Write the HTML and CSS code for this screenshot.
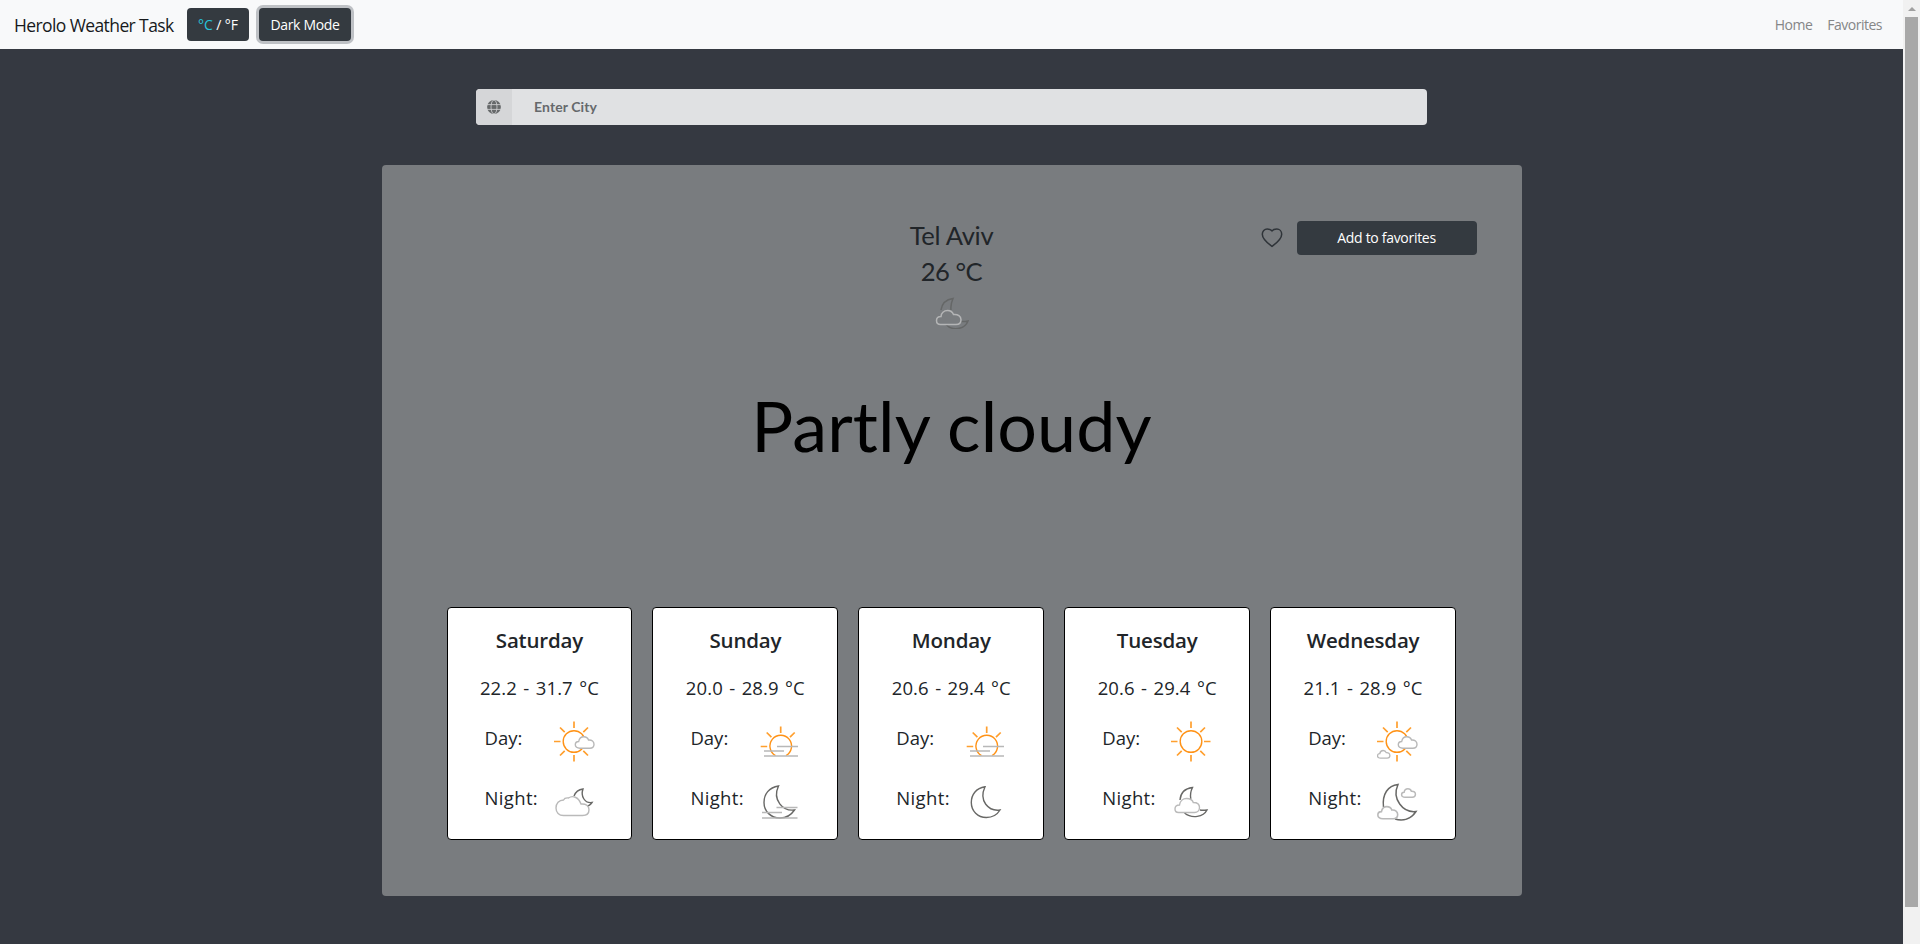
FILE: index.html
```html
<!DOCTYPE html>
<html lang="en">
<head>
<meta charset="utf-8">
<title>Herolo Weather Task</title>
<link rel="stylesheet" href="styles.css">
</head>
<body>
<svg class="defs" width="0" height="0">
  <defs>
    <g id="rays" stroke="#ff9f2e" stroke-width="1.7" fill="none">
      <path d="M20 .5v6.500M0 20.500h6.500M6 6.500l4.700 4.700M34 6.500l-4.700 4.700"/>
    </g>
    <path id="cloud" d="M5.500 12.200C2.500 12.200.8 10.800.8 8.700c0-2 1.400-3.200 3.400-3.200C4.700 2.700 6.700.8 9.300.8c2.300 0 4 1.200 4.700 3.200 3.400-.3 5.500 1.600 5.500 4.200 0 2.400-1.700 4-4.200 4z"/>
    <path id="moon" d="M14.500.8C5.500 2 .8 9 .8 16.500c0 8.500 6.500 15 15 15 6 0 11-3 13.700-7.500C18 25.500 8 15 14.500.8z"/>
  </defs>
</svg>
<div class="window">
  <div class="page">
    <nav class="navbar">
      <span class="brand">Herolo Weather Task</span>
      <button class="btn btn-unit"><span class="unit-on">°C</span> / °F</button>
      <button class="btn btn-mode focused">Dark Mode</button>
      <div class="links"><a>Home</a><a>Favorites</a></div>
    </nav>
    <div class="search">
      <span class="addon">
        <svg width="14" height="14" viewBox="0 0 14 14"><circle cx="7" cy="7" r="6.900" fill="#66696a"/><g fill="none" stroke="#d5d6d8" stroke-width=".8"><ellipse cx="7" cy="7" rx="3" ry="7"/><path d="M0 4.600h14M0 9.400h14"/></g></svg>
      </span>
      <span class="field">Enter City</span>
    </div>
    <main class="panel">
      <div class="top">
        <div></div>
        <div class="current">
          <div class="city">Tel Aviv</div>
          <div class="temp">26 °C</div>
          <svg class="now" width="34" height="32" viewBox="0 0 34 32" fill="none" stroke-width="1.500"><path d="M6 13C7 6 11 2.500 18 1.500 16 6 15.500 9 16 13M25.500 24.300C28 24.800 30.500 24.500 33 24 29.500 33 17 34 11 27.500" stroke="#656767"/><path d="M5.500 27.500C3 27.500 1.500 26 1.500 23.500c0-2.500 1.800-4 4.500-4 0-3.500 3-6 6.500-6 3 0 5 1.500 6 4 4.500-.5 7.500 1.800 7.500 5.200 0 2.800-2 4.800-5 4.800z" stroke="#b4b5b6"/></svg>
        </div>
        <div class="favorite">
          <svg width="22" height="20" viewBox="0 0 22 20" fill="none" stroke="#2f3439" stroke-width="1.500"><path d="M11 18.400C7.500 15.700 1.300 11.500 1.300 6.200 1.300 3.200 3.500 1 6.200 1 8.300 1 10 1.500 11 2.900 12 1.500 13.700 1 15.800 1c2.700 0 4.900 2.200 4.900 5.200 0 5.300-6.200 9.500-9.700 12.200z"/></svg>
          <button class="btn btn-fav">Add to favorites</button>
        </div>
      </div>
      <h1 class="headline">Partly cloudy</h1>
      <div class="days">
        <section class="card">
          <h2 class="day-name">Saturday</h2>
          <p class="range">22.2 - 31.7 °C</p>
          <div class="row"><span class="label">Day:</span>
            <svg width="42" height="42" viewBox="0 0 42 42"><use href="#rays"/><path d="M20 34v6.500M6 34.500l4.700-4.700M34 34.500l-4.700-4.700" stroke="#ff9f2e" stroke-width="1.700"/><circle cx="20" cy="20.500" r="10.800" fill="none" stroke="#ff9216" stroke-width="1.400"/><use href="#cloud" x="20.500" y="15" fill="#fff" stroke="#b8b8b8" stroke-width="1.400"/></svg></div>
          <div class="row night"><span class="label">Night:</span>
            <svg width="42" height="42" viewBox="0 0 42 42" fill="none" stroke-width="1.400"><path d="M20 14C21.500 10 24.500 7.500 29 7 26.500 14 30.500 21.500 38 20.500 36 23.500 33 25 29 24" stroke="#686866"/><path d="M9.500 33.500C5 33.500 2 30.500 2 26s3-8 7.500-8c1-2 3-2.300 5-2 4-3 10-1 12.500 6 5-.5 8 2 8 5.700 0 3.500-2.500 5.800-6.500 5.800z" stroke="#bababa" fill="#fff"/></svg></div>
        </section>
        <section class="card">
          <h2 class="day-name">Sunday</h2>
          <p class="range">20.0 - 28.9 °C</p>
          <div class="row"><span class="label">Day:</span>
            <svg width="42" height="42" viewBox="0 0 42 42" fill="none"><use href="#rays" x="1.700" y="5"/><path d="M16.500 34.500A10.800 10.800 0 1 1 27 34.500" stroke="#ff9216" stroke-width="1.400"/><path d="M18 25.500h21M5 30h20M5 35h34" stroke="#b8b8b8" stroke-width="1.500"/></svg></div>
          <div class="row night"><span class="label">Night:</span>
            <svg width="42" height="42" viewBox="0 0 42 42" fill="none" stroke-width="1.400"><path d="M19.500 4C10 5.500 5 12 5 20.500c0 9 7 15.500 16 15.500 6.500 0 11.500-3.500 14.500-8C24 29.500 13 18 19.500 4z" stroke="#686866"/><path d="M17.500 25.500h21M3 30.500h20M3 36h35.500" stroke="#b8b8b8"/></svg></div>
        </section>
        <section class="card">
          <h2 class="day-name">Monday</h2>
          <p class="range">20.6 - 29.4 °C</p>
          <div class="row"><span class="label">Day:</span>
            <svg width="42" height="42" viewBox="0 0 42 42" fill="none"><use href="#rays" x="1.700" y="5"/><path d="M16.500 34.500A10.800 10.800 0 1 1 27 34.500" stroke="#ff9216" stroke-width="1.400"/><path d="M18 25.500h21M5 30h20M5 35h34" stroke="#b8b8b8" stroke-width="1.500"/></svg></div>
          <div class="row night"><span class="label">Night:</span>
            <svg width="42" height="42" viewBox="0 0 42 42" fill="none"><use href="#moon" x="5.500" y="4" stroke="#686866" stroke-width="1.400"/></svg></div>
        </section>
        <section class="card">
          <h2 class="day-name">Tuesday</h2>
          <p class="range">20.6 - 29.4 °C</p>
          <div class="row"><span class="label">Day:</span>
            <svg width="42" height="42" viewBox="0 0 42 42" fill="none"><use href="#rays"/><path d="M20 34v6.500M33 20.500h6.500M6 34.500l4.700-4.700M34 34.500l-4.700-4.700" stroke="#ff9f2e" stroke-width="1.700"/><circle cx="20" cy="20.500" r="10.800" stroke="#ff9216" stroke-width="1.400"/></svg></div>
          <div class="row night"><span class="label">Night:</span>
            <svg width="42" height="42" viewBox="0 0 42 42" fill="none" stroke-width="1.400"><path d="M9 18C9.500 11 14 6.500 21.500 5.500 19.500 9.500 19 13 19.800 17M29 28C31.500 28.500 33.500 28.300 36 28 32.500 35 21 37 13.500 31" stroke="#686866"/><path d="M7.500 30.500C5.500 30.500 4 29 4 27c0-2.500 1.800-4 4.500-4 .5-4 3.500-6.500 7-6.500 3.300 0 6 1.500 6.800 4 4 0 6.200 2 6.200 5 0 2.800-2 5-5 5z" stroke="#bababa"/></svg></div>
        </section>
        <section class="card">
          <h2 class="day-name">Wednesday</h2>
          <p class="range">21.1 - 28.9 °C</p>
          <div class="row"><span class="label">Day:</span>
            <svg width="42" height="42" viewBox="0 0 42 42"><use href="#rays"/><path d="M20 34v6.500M34 34.500l-4.700-4.700" stroke="#ff9f2e" stroke-width="1.700"/><circle cx="20" cy="20.500" r="10.800" fill="none" stroke="#ff9216" stroke-width="1.400"/><g fill="#fff" stroke="#b8b8b8"><use href="#cloud" x="20.500" y="15" stroke-width="1.400"/><use href="#cloud" transform="translate(0 29) scale(.66)" stroke-width="2"/></g></svg></div>
          <div class="row night"><span class="label">Night:</span>
            <svg width="42" height="42" viewBox="0 0 42 42" fill="none" stroke-width="1.500"><path d="M6.500 25C5 12 11 3.500 21 2.500 14.500 17 26 31 39 29.500 34 37 26 39.500 18 37" stroke="#686866"/><g stroke="#bababa" fill="#fff"><use href="#cloud" transform="translate(0 23.800) scale(1.060)"/><use href="#cloud" transform="translate(24 6.200) scale(.74)" stroke-width="2"/></g></svg></div>
        </section>
      </div>
    </main>
  </div>
  <div class="scrollbar"><span class="arrow"></span><span class="thumb"></span></div>
</div>
</body>
</html>
```
FILE: styles.css
```css
* { box-sizing: border-box; }
body { margin: 0; background: #343a40; font-family: "Open Sans", "Noto Sans", sans-serif; color: #212529; overflow: hidden; }
.defs { display: block; }
.window { display: flex; height: 944px; }
.page { flex: 1; background: #353941; }
.navbar { display: flex; align-items: center; height: 49px; padding: 0 21px 0 14px; background: #f8f9fa; }
.brand { width: 173px; padding-top: 1px; font-size: 17.500px; letter-spacing: -.6px; white-space: nowrap; color: #17191c; }
.btn { height: 33px; padding: 0; border: 0; border-radius: 4px; background: #343a40; color: #fff; font: 500 14px "Open Sans", sans-serif; white-space: nowrap; }
.btn-unit { width: 62px; margin-right: 10px; letter-spacing: -.1px; }
.unit-on { color: #27c4dc; }
.btn-mode { width: 92px; letter-spacing: -.35px; }
.focused { box-shadow: 0 0 0 3px #bec1c5; }
.links { display: flex; gap: 15px; margin-left: auto; font-size: 14px; letter-spacing: -.5px; color: #858687; }
.search { display: flex; width: 951px; height: 36px; margin: 40px auto; border-radius: 4px; overflow: hidden; background: #e0e1e3; }
.addon { display: flex; align-items: center; justify-content: center; width: 36px; background: #d5d6d8; }
.field { padding-left: 22px; font: 700 14px/36px Lato, sans-serif; letter-spacing: .1px; color: #66696c; }
.panel { width: 1140px; height: 731px; margin: 0 auto; padding: 52px 45px 0 65px; border-radius: 4px; background: #797c7f; }
.top { display: grid; grid-template-columns: 415px 180px 1fr; height: 163px; }
.current { display: flex; flex-direction: column; align-items: center; width: 180px; font: 25.600px/36px Lato, sans-serif; }
.city { letter-spacing: -.3px; }
.temp { letter-spacing: -.5px; }
.now { margin-top: 8px; }
.favorite { display: flex; justify-content: flex-end; gap: 14px; height: 34px; margin-top: 4px; align-items: center; }
.btn-fav { width: 180px; height: 34px; padding-bottom: 1px; letter-spacing: -.3px; }
.headline { width: 1010px; margin: 0; font: 400 70px/90px Lato, sans-serif; letter-spacing: .1px; color: #000; text-align: center; }
.days { display: flex; gap: 20px; width: 1009.500px; margin-top: 137px; }
.card { flex: 1; min-width: 0; height: 233px; padding: 17px 0 0 36px; border: 1px solid #000; border-radius: 4px; background: #fff; }
.day-name { margin: 0 0 0 -36px; font-size: 20.500px; font-weight: 600; letter-spacing: -.2px; line-height: 30px; text-align: center; }
.range { margin: 18px 0 0 -36px; font-size: 18.500px; word-spacing: 1.500px; letter-spacing: .1px; line-height: 30px; text-align: center; white-space: nowrap; }
.row { display: flex; height: 42px; margin-top: 18px; }
.label { width: 70px; padding-left: 1px; font-size: 18.500px; line-height: 34px; white-space: nowrap; }
.night .label { letter-spacing: .35px; }
.night svg { margin-top: 1px; }
.scrollbar { display: flex; flex-direction: column; align-items: center; width: 17px; padding-top: 7px; background: #f1f1f1; }
.arrow { border: 4px solid transparent; border-top: 0; border-bottom-color: #a0a0a0; }
.thumb { width: 13px; height: 890px; margin-top: 6px; background: #a8a8a8; }
```
